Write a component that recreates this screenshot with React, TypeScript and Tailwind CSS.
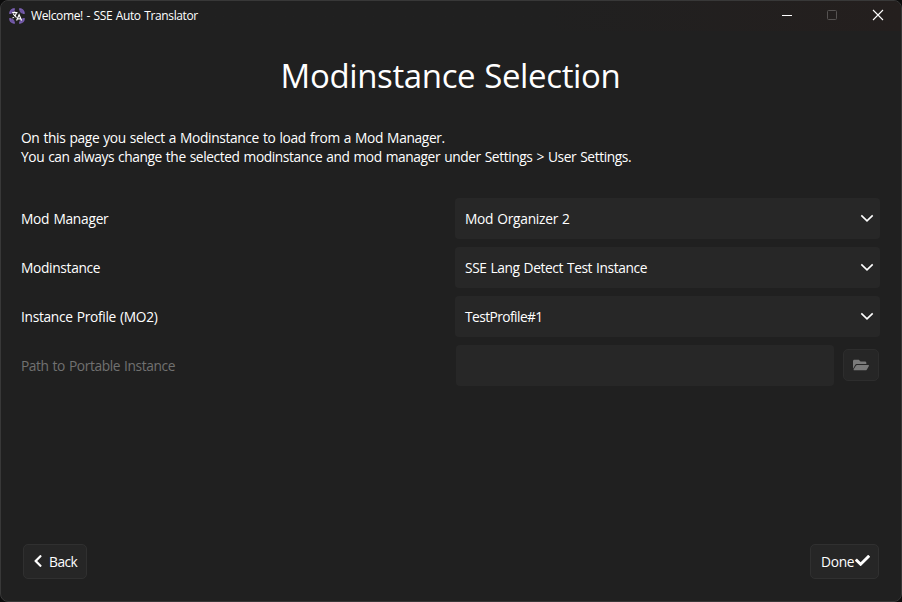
import { FaCheck, FaChevronLeft, FaFolderOpen } from "react-icons/fa";

const rows = [
  { label: "Mod Manager", value: "Mod Organizer 2", ls: "tracking-[-0.26px]", vs: "tracking-[-0.27px]" },
  { label: "Modinstance", value: "SSE Lang Detect Test Instance", ls: "tracking-[-0.32px]", vs: "tracking-[-0.4px]" },
  { label: "Instance Profile (MO2)", value: "TestProfile#1", ls: "tracking-[-0.31px]", vs: "tracking-[-0.56px]" },
];

function AppIcon() {
  return (
    <svg className="h-4 w-4" viewBox="0 0 16 16" fill="none">
      <path d="M1.2 5.8C1.5 3 3 1.5 5.8 1.2M10.2 1.2C13 1.5 14.5 3 14.8 5.8M14.8 10.2C14.5 13 13 14.5 10.2 14.8M5.8 14.8C3 14.5 1.5 13 1.2 10.2" stroke="#7a5fb2" strokeWidth="2.4" />
      <path d="M2.4 4.4L4.4 2.4M11.6 2.4l2 2M13.6 11.6l-2 2M4.4 13.6l-2-2" stroke="#6d55a0" strokeWidth="3" />
      <path d="M3.2 4.6h5.3M5.7 3.4v1.2M7.5 4.8C7 7 5.6 8.8 3.6 9.9M4.3 5.8c.8 1.6 2 2.8 3.3 3.7" stroke="#fff" strokeWidth="1.1" />
      <path d="M7.6 12.5l2.5-5.8 2.5 5.8M8.5 10.8h3.3" stroke="#fff" strokeWidth="1.2" />
    </svg>
  );
}

export default function App() {
  return (
    <div className="h-[602px] w-[902px] overflow-hidden bg-[#0c0c0c] font-['Open_Sans','Noto_Sans',sans-serif] text-[13.75px] text-white [word-spacing:0.8px]">
      <div className="flex h-full flex-col rounded-[8px] border border-[#383838] bg-[#202020]">
        <header className="flex h-[30px] shrink-0 items-center rounded-t-[7px] bg-linear-to-r from-[#202020] from-60% to-[#241f1e] pl-2">
          <AppIcon />
          <span className="ml-[6px] text-xs leading-4 tracking-[-0.37px] whitespace-nowrap">Welcome! - SSE Auto Translator</span>
          <div className="ml-auto flex items-center">
            <svg className="h-[30px] w-[46px]" viewBox="0 0 46 30" fill="none"><path d="M18 14.5h10" stroke="#fff" /></svg>
            <svg className="h-[30px] w-[45px]" viewBox="0 0 45 30" fill="none"><rect x="17.5" y="9.5" width="9" height="9" rx="1" stroke="#565352" /></svg>
            <svg className="h-[30px] w-[46px]" viewBox="0 0 46 30" fill="none"><path d="M18 9l10 10M28 9l-10 10" stroke="#fff" strokeWidth="1.1" /></svg>
          </div>
        </header>
        <main className="flex flex-1 flex-col pr-[21px] pl-5">
          <h1 className="mt-[21px] h-12 text-center text-[33px] leading-[48px] tracking-[-0.37px] whitespace-nowrap">Modinstance Selection</h1>
          <p className="mt-[28px] leading-[19px] tracking-[-0.35px] whitespace-nowrap">
            On this page you select a Modinstance to load from a Mod Manager.<br />
            <span className="tracking-[-0.4px]">You can always change the selected modinstance and mod manager under Settings &gt;&nbsp;User Settings.</span>
          </p>
          <div className="mt-[32px] flex flex-col gap-2">
            {rows.map((r) => (
              <div key={r.label} className="flex h-[41px] items-center leading-5">
                <span className={`w-[434px] ${r.ls}`}>{r.label}</span>
                <div className="flex h-full flex-1 items-center justify-between rounded-[4px] bg-[#272727] pr-[6px] pl-[10px]">
                  <span className={r.vs}>{r.value}</span>
                  <svg className="h-[14px] w-[14px] -translate-y-px" viewBox="0 0 14 14" fill="none"><path d="M1.3 4.4L7 9.9l5.7-5.5" stroke="#fff" strokeWidth="1.6" /></svg>
                </div>
              </div>
            ))}
            <div className="flex h-[41px] items-center leading-5 text-[#717171]">
              <span className="w-[435px] tracking-[-0.4px]">Path to Portable Instance</span>
              <div className="h-full w-[378px] rounded-[4px] bg-[#272727]" />
              <div className="mb-px ml-[9px] flex h-8 w-9 items-center justify-center rounded-[5px] border border-[#2d2d2d] bg-[#262626]">
                <FaFolderOpen className="h-4 w-4 text-[#7b7b7b]" />
              </div>
            </div>
          </div>
          <footer className="mt-auto mb-[22px] flex justify-between pr-px pl-[2px] leading-5">
            <button className="flex h-[35px] w-16 items-center rounded-[5px] border border-[#303030] bg-[#262626] pl-[8px]">
              <FaChevronLeft className="h-[14px] w-3 -translate-y-px" />
              <span className="ml-[5px] tracking-[-0.5px]">Back</span>
            </button>
            <button className="flex h-[35px] w-[69px] items-center rounded-[5px] border border-[#303030] bg-[#262626] pl-[10px]">
              <span className="tracking-[-0.3px]">Done</span>
              <FaCheck className="ml-px h-[15px] w-[15px] shrink-0 -translate-y-px" />
            </button>
          </footer>
        </main>
      </div>
    </div>
  );
}
